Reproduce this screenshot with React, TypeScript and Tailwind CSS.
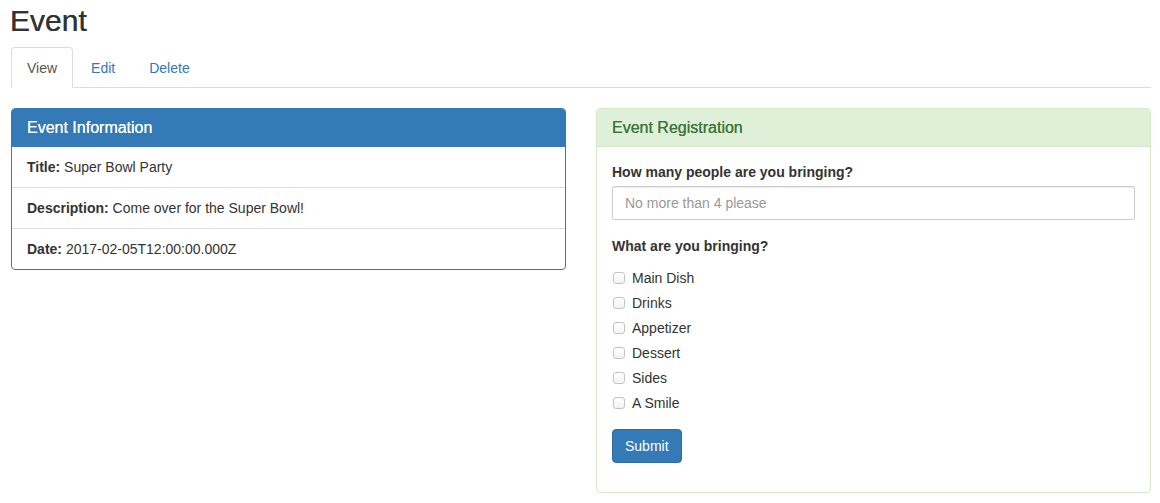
import React from "react";

const items = ["Main Dish", "Drinks", "Appetizer", "Dessert", "Sides", "A Smile"];

export default function App() {
  return (
    <div
      className="w-[1160px] h-[503px] bg-white text-[#333] text-[14px] leading-[20px] overflow-hidden"
      style={{ fontFamily: '"Liberation Sans", Arial, sans-serif' }}
    >
      <div className="pl-[11px] pr-[9px]">
        <h2 className="text-[30px] leading-[33px] font-normal pt-[4px] mb-[10px] -ml-[1px] [text-shadow:0_0_0.6px_#333]">Event</h2>
        <ul className="flex border-b border-[#ddd] h-[41px]">
          <li className="mr-[2px] -mb-[1px]">
            <span className="block px-[15px] py-[10px] border border-[#ddd] border-b-transparent rounded-t-[4px] bg-white text-[#555] h-[41px]">
              View
            </span>
          </li>
          <li className="mr-[2px]">
            <span className="block px-[15px] py-[10px] border border-transparent text-[#337ab7]">Edit</span>
          </li>
          <li className="mr-[2px]">
            <span className="block px-[15px] py-[10px] border border-transparent text-[#337ab7]">Delete</span>
          </li>
        </ul>
        <div className="flex gap-[30px] mt-[20px] items-start">
          <div className="w-[555px] border border-[#337ab7] rounded-[4px] overflow-hidden">
            <div className="bg-[#337ab7] text-white text-[16px] leading-[18px] px-[15px] py-[10px] h-[38px] [text-shadow:0_0_0.5px_#fff]">
              Event Information
            </div>
            <div className="px-[15px] py-[10px]">
              <b>Title:</b> Super Bowl Party
            </div>
            <div className="px-[15px] py-[10px] border-t border-[#ddd]">
              <b>Description:</b> Come over for the Super Bowl!
            </div>
            <div className="px-[15px] py-[10px] border-t border-[#ddd]">
              <b>Date:</b> 2017-02-05T12:00:00.000Z
            </div>
          </div>
          <div className="w-[555px] border border-[#d6e9c6] rounded-[4px] overflow-hidden">
            <div className="bg-[#dff0d8] text-[#3c763d] text-[16px] leading-[18px] px-[15px] py-[10px] h-[38px] border-b border-[#d6e9c6] [text-shadow:0_0_0.5px_#3c763d]">
              Event Registration
            </div>
            <div className="p-[15px]">
              <div className="mb-[16px]">
                <label className="block font-bold mb-[4px]">How many people are you bringing?</label>
                <div className="h-[34px] border border-[#ccc] rounded-[2px] px-[12px] py-[6px] text-[#999] shadow-[inset_0_1px_1px_rgba(0,0,0,0.075)]">
                  No more than 4 please
                </div>
              </div>
              <div className="mb-[15px]">
                <label className="block font-bold mb-[12px]">What are you bringing?</label>
                <div className="flex flex-col gap-[5px]">
                  {items.map((it) => (
                    <div key={it} className="flex items-center h-[20px]">
                      <span className="w-[12px] h-[12px] ml-[1px] mr-[7px] border border-[#c4c4c4] rounded-[3px] bg-gradient-to-b from-white to-[#f3f3f3]" />
                      <span>{it}</span>
                    </div>
                  ))}
                </div>
              </div>
              <div className="pt-[1px] mb-[14px]">
                <span className="inline-block h-[34px] px-[12px] py-[6px] bg-[#337ab7] border border-[#2e6da4] rounded-[4px] text-white">
                  Submit
                </span>
              </div>
            </div>
          </div>
        </div>
      </div>
    </div>
  );
}
